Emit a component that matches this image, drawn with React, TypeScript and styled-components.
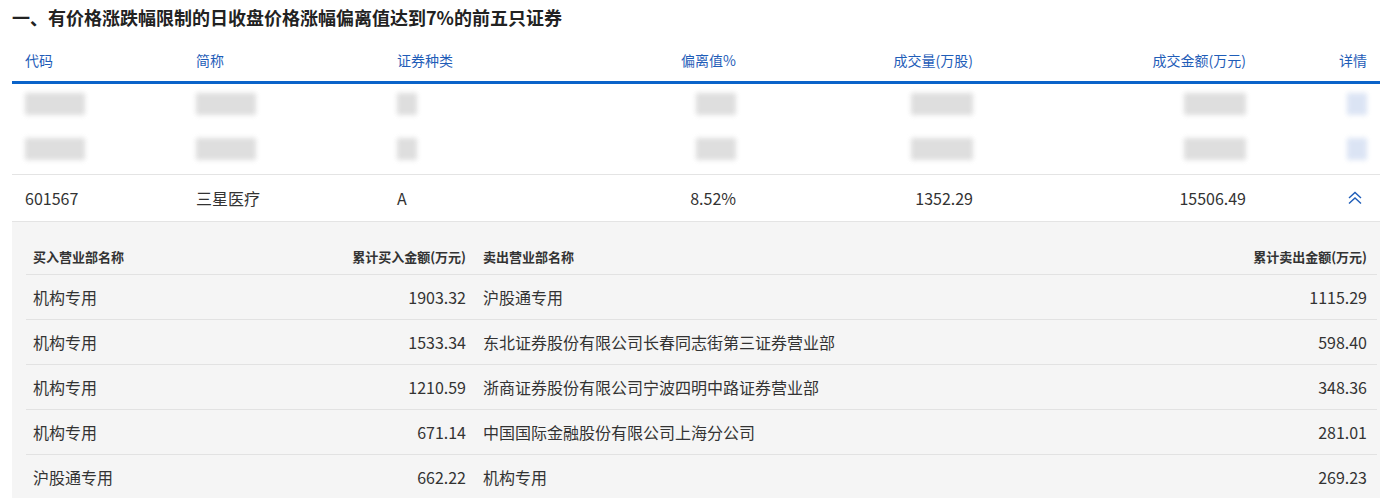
import React from "react";
import styled, { createGlobalStyle } from "styled-components";

const G = createGlobalStyle`
  body { margin: 0; background: #fff; font-family: "Microsoft YaHei", "Noto Sans CJK SC", sans-serif; color: #333; }
`;
const Page = styled.div` padding: 0 0 0 12px; `;
const Title = styled.h2` margin: 0; height: 36px; line-height: 34px; font-size: 18px; font-weight: bold; color: #222; `;
const cols = "171px 201px 200px 152px 237px 273px 121px";
const Head = styled.div`
  display: grid; grid-template-columns: ${cols}; height: 42px; align-items: center;
  border-bottom: 3px solid #0a63c9; margin-top: 3px; font-size: 14px; color: #1f5db8;
`;
const Cell = styled.div<{ $r?: boolean }>`
  padding-left: ${(p) => (p.$r ? "0" : "13px")}; text-align: ${(p) => (p.$r ? "right" : "left")};
`;
const Row = styled.div<{ $h: number; $line?: boolean }>`
  display: grid; grid-template-columns: ${cols}; height: ${(p) => p.$h}px; align-items: center;
  font-size: 16px; color: #333; ${(p) => (p.$line ? "border-bottom: 1px solid #e4e4e4;" : "")}
`;
const Blur = styled.span<{ $w: number; $blue?: boolean }>`
  display: inline-block; width: ${(p) => p.$w}px; height: 22px;
  background: ${(p) => (p.$blue ? "#d3def2" : "#d6d6d6")}; filter: blur(2.5px); opacity: .8;
`;
const Panel = styled.div` background: #f5f5f5; padding: 16px 3px 0 14px; height: 280px; `;
const SubHead = styled.div`
  display: grid; grid-template-columns: 300px 140px 1fr 300px; height: 36px; align-items: center;
  font-size: 13px; font-weight: bold; color: #333; border-bottom: 1px solid #e2e2e2;
`;
const SubRow = styled(SubHead)` height: 44px; font-size: 16px; font-weight: normal; `;
const SC = styled.div<{ $r?: boolean; $pl?: number; $pr?: number }>`
  padding-left: ${(p) => p.$pl ?? 0}px; padding-right: ${(p) => p.$pr ?? 0}px;
  text-align: ${(p) => (p.$r ? "right" : "left")}; white-space: nowrap;
`;

const blurRow = [60, 60, 20, 40, 62, 62, 20];
const data = [
  ["机构专用", "1903.32", "沪股通专用", "1115.29"],
  ["机构专用", "1533.34", "东北证券股份有限公司长春同志街第三证券营业部", "598.40"],
  ["机构专用", "1210.59", "浙商证券股份有限公司宁波四明中路证券营业部", "348.36"],
  ["机构专用", "671.14", "中国国际金融股份有限公司上海分公司", "281.01"],
  ["沪股通专用", "662.22", "机构专用", "269.23"],
];
const right = [false, false, false, true, true, true, true];

export default function App() {
  return (
    <Page>
      <G />
      <Title>一、有价格涨跌幅限制的日收盘价格涨幅偏离值达到7%的前五只证券</Title>
      <Head>
        {["代码", "简称", "证券种类", "偏离值%", "成交量(万股)", "成交金额(万元)", "详情"].map((t, i) => (
          <Cell key={t} $r={right[i]}>{t}</Cell>
        ))}
      </Head>
      {[0, 1].map((k) => (
        <Row key={k} $h={k === 0 ? 44 : 46} $line={k === 1}>
          {blurRow.map((w, i) => (
            <Cell key={i} $r={right[i]}><Blur $w={w} $blue={i === 6} /></Cell>
          ))}
        </Row>
      ))}
      <Row $h={46} $line>
        <Cell>601567</Cell><Cell>三星医疗</Cell><Cell>A</Cell>
        <Cell $r>8.52%</Cell><Cell $r>1352.29</Cell><Cell $r>15506.49</Cell>
        <Cell $r>
          <svg width="16" height="14" viewBox="0 0 16 14" fill="none" stroke="#1f5db8" strokeWidth="1.4" style={{ marginRight: 4 }}>
            <path d="M2 7 L8 1.5 L14 7 M2 12.5 L8 7 L14 12.5" />
          </svg>
        </Cell>
      </Row>
      <Panel>
        <SubHead><SC $pl={7}>买入营业部名称</SC><SC $r>累计买入金额(万元)</SC><SC $pl={17}>卖出营业部名称</SC><SC $r $pr={10}>累计卖出金额(万元)</SC></SubHead>
        {data.map((d, i) => (
          <SubRow key={i}>
            <SC $pl={7}>{d[0]}</SC><SC $r>{d[1]}</SC><SC $pl={17}>{d[2]}</SC><SC $r $pr={10}>{d[3]}</SC>
          </SubRow>
        ))}
      </Panel>
    </Page>
  );
}
